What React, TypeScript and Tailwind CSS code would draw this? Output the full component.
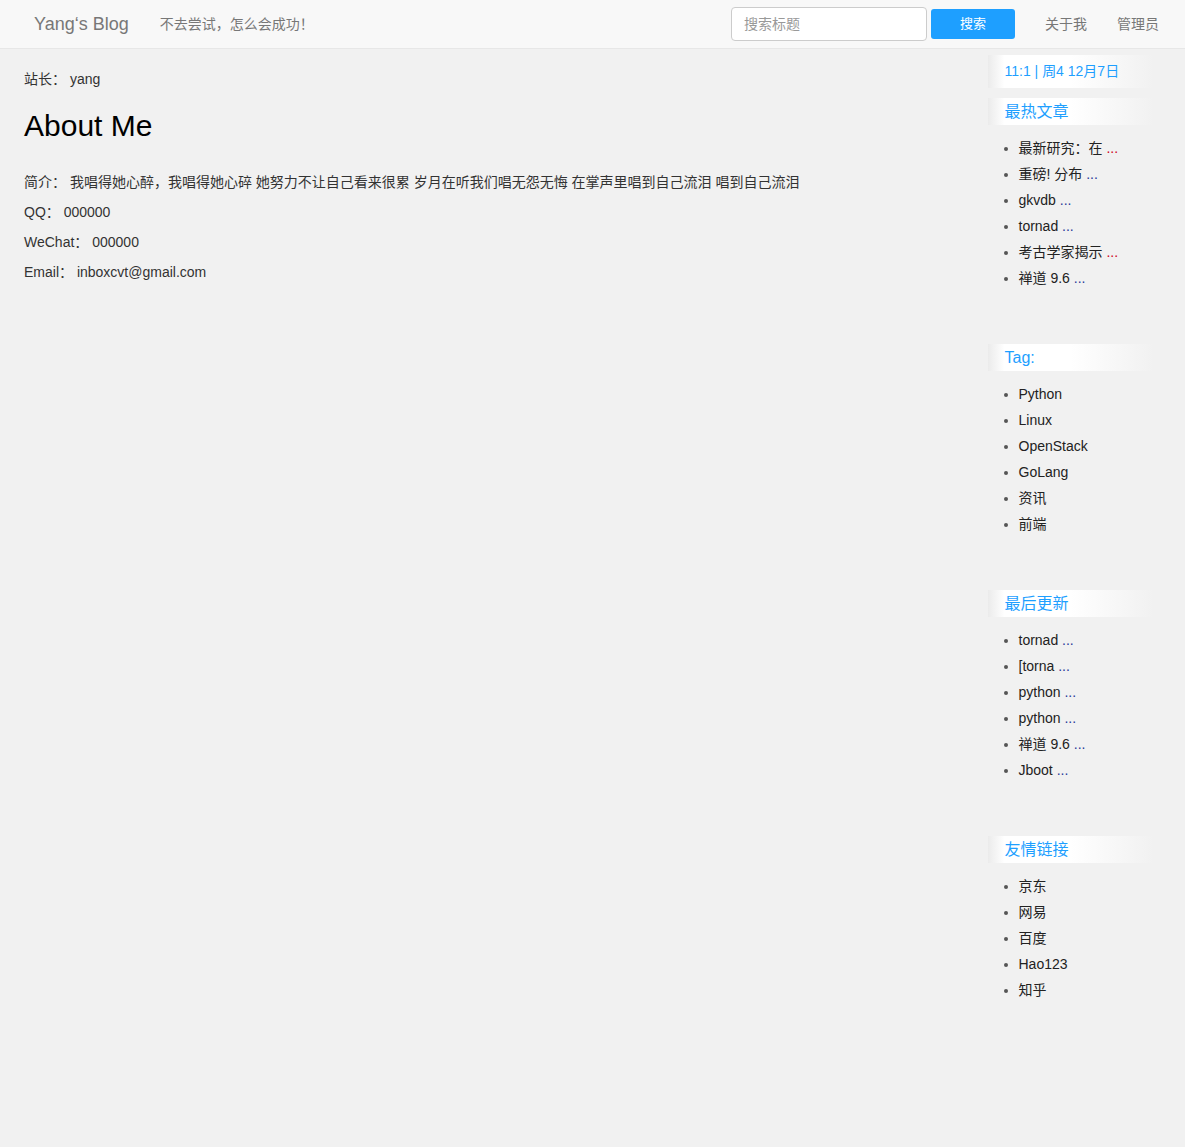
import React from 'react';

type Item = { text: string; dots?: 'red' | 'blue' };

const hotArticles: Item[] = [
  { text: '最新研究：在', dots: 'red' },
  { text: '重磅! 分布', dots: 'blue' },
  { text: 'gkvdb', dots: 'blue' },
  { text: 'tornad', dots: 'blue' },
  { text: '考古学家揭示', dots: 'red' },
  { text: '禅道 9.6', dots: 'blue' },
];

const tags: Item[] = [
  { text: 'Python' },
  { text: 'Linux' },
  { text: 'OpenStack' },
  { text: 'GoLang' },
  { text: '资讯' },
  { text: '前端' },
];

const lastUpdates: Item[] = [
  { text: 'tornad', dots: 'blue' },
  { text: '[torna', dots: 'blue' },
  { text: 'python', dots: 'blue' },
  { text: 'python', dots: 'blue' },
  { text: '禅道 9.6', dots: 'blue' },
  { text: 'Jboot', dots: 'blue' },
];

const friendLinks: Item[] = [
  { text: '京东' },
  { text: '网易' },
  { text: '百度' },
  { text: 'Hao123' },
  { text: '知乎' },
];

const fadeBox =
  'w-[165px] bg-[linear-gradient(to_right,#ebebeb_0%,#ffffff_10%,#ffffff_50%,#f1f1f1_100%)]';

const SideSection = ({ title, items }: { title: string; items: Item[] }) => (
  <div className="mb-[53px]">
    <div className={`${fadeBox} h-[27px] pl-[17px] text-[16px] leading-[27px] text-[#1e9fff]`}>
      {title}
    </div>
    <ul className="mt-[10px] list-disc pl-[31px] marker:text-[#555]">
      {items.map((it, i) => (
        <li key={i} className="text-[14px] leading-[26px] text-[#222]">
          {it.text}
          {it.dots && (
            <span className={it.dots === 'red' ? 'text-[#d0021b]' : 'text-[#2a3a9a]'}> ...</span>
          )}
        </li>
      ))}
    </ul>
  </div>
);

export default function App() {
  return (
    <div
      className="min-h-[1147px] bg-[#f1f1f1] text-[14px] text-[#333]"
      style={{ fontFamily: '"Liberation Sans", Arial, "Noto Sans CJK SC", sans-serif' }}
    >
      {/* Navbar */}
      <nav className="flex h-[49px] items-center border-b border-[#e7e7e7] bg-[#f8f8f8] pr-[11px]">
        <a className="ml-[34px] text-[18px] text-[#777]">Yang‘s Blog</a>
        <span className="ml-[31px] text-[14px] text-[#777]">不去尝试，怎么会成功！</span>
        <div className="ml-auto flex items-center">
          <input
            placeholder="搜索标题"
            className="h-[34px] w-[196px] rounded-[4px] border border-[#ccc] bg-white px-[12px] text-[14px] text-[#555] placeholder:text-[#999] outline-none"
          />
          <button className="ml-[4px] h-[30px] w-[84px] rounded-[3px] bg-[#1e9fff] text-[13px] text-white">
            搜索
          </button>
          <a className="ml-[30px] text-[14px] text-[#777]">关于我</a>
          <a className="ml-[30px] mr-[15px] text-[14px] text-[#777]">管理员</a>
        </div>
      </nav>

      <div className="flex">
        {/* Main */}
        <main className="w-[987.5px] px-[24px]">
          <p className="mt-[20px] leading-[20px]">站长： yang</p>
          <h2 className="mt-[20px] text-[30px] leading-[33px] text-black">About Me</h2>
          <div className="mt-[30px] space-y-[10px] leading-[20px]">
            <p>
              简介： 我唱得她心醉，我唱得她心碎 她努力不让自己看来很累 岁月在听我们唱无怨无悔 在掌声里唱到自己流泪 唱到自己流泪
            </p>
            <p>QQ： 000000</p>
            <p>WeChat： 000000</p>
            <p>Email： inboxcvt@gmail.com</p>
          </div>
        </main>

        {/* Sidebar */}
        <aside className="flex-1 pt-[6px]">
          <div className={`${fadeBox} h-[33px] pl-[17px] text-[14px] leading-[33px] text-[#1e9fff]`}>
            11:1 | 周4 12月7日
          </div>
          <div className="mt-[10px]">
            <SideSection title="最热文章" items={hotArticles} />
            <SideSection title="Tag:" items={tags} />
            <SideSection title="最后更新" items={lastUpdates} />
            <SideSection title="友情链接" items={friendLinks} />
          </div>
        </aside>
      </div>
    </div>
  );
}
